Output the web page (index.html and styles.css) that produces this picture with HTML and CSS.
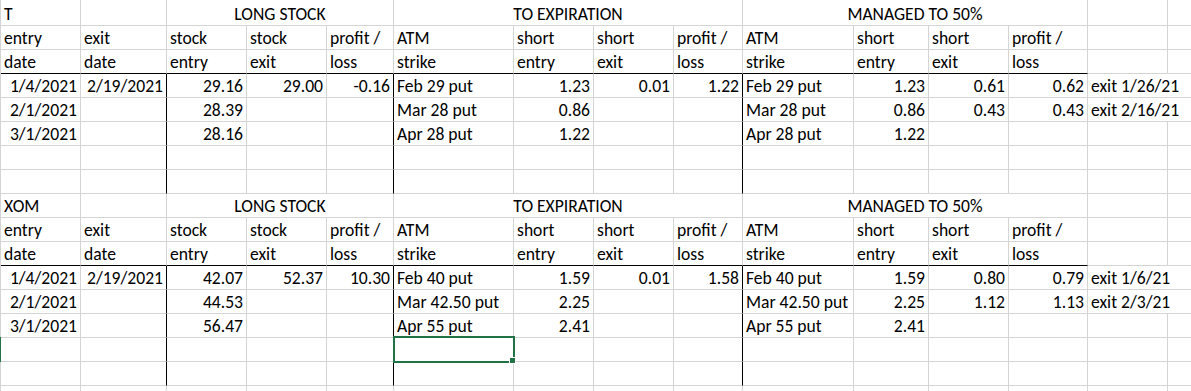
FILE: index.html
```html
<!DOCTYPE html>
<html>
<head>
<meta charset="utf-8">
<link rel="stylesheet" href="styles.css">
</head>
<body>
<div class="sheet">
  <div class="grid">
    <!-- row 1 -->
    <div class="c first">T</div><div class="c first"></div>
    <div class="c first ctr s3">LONG STOCK</div>
    <div class="c first ctr s4">TO EXPIRATION</div>
    <div class="c first ctr s4">MANAGED TO 50%</div>
    <div class="c first"></div><div class="c first last"></div>
    <!-- row 2 -->
    <div class="c">entry</div><div class="c">exit</div><div class="c">stock</div><div class="c">stock</div><div class="c">profit /</div>
    <div class="c">ATM</div><div class="c">short</div><div class="c">short</div><div class="c">profit /</div>
    <div class="c">ATM</div><div class="c">short</div><div class="c">short</div><div class="c">profit /</div>
    <div class="c"></div><div class="c last"></div>
    <!-- row 3 -->
    <div class="c bb">date</div><div class="c bb">date</div><div class="c bb">entry</div><div class="c bb">exit</div><div class="c bb">loss</div>
    <div class="c bb">strike</div><div class="c bb">entry</div><div class="c bb">exit</div><div class="c bb">loss</div>
    <div class="c bb">strike</div><div class="c bb">entry</div><div class="c bb">exit</div><div class="c bb">loss</div>
    <div class="c"></div><div class="c last"></div>
    <!-- row 4 -->
    <div class="c r">1/4/2021</div><div class="c r br">2/19/2021</div><div class="c r">29.16</div><div class="c r">29.00</div><div class="c r br">-0.16</div>
    <div class="c">Feb 29 put</div><div class="c r">1.23</div><div class="c r">0.01</div><div class="c r br">1.22</div>
    <div class="c">Feb 29 put</div><div class="c r">1.23</div><div class="c r">0.61</div><div class="c r">0.62</div>
    <div class="c s2 last">exit 1/26/21</div>
    <!-- row 5 -->
    <div class="c r">2/1/2021</div><div class="c br"></div><div class="c r">28.39</div><div class="c"></div><div class="c br"></div>
    <div class="c">Mar 28 put</div><div class="c r">0.86</div><div class="c"></div><div class="c br"></div>
    <div class="c">Mar 28 put</div><div class="c r">0.86</div><div class="c r">0.43</div><div class="c r">0.43</div>
    <div class="c s2 last">exit 2/16/21</div>
    <!-- row 6 -->
    <div class="c r">3/1/2021</div><div class="c br"></div><div class="c r">28.16</div><div class="c"></div><div class="c br"></div>
    <div class="c">Apr 28 put</div><div class="c r">1.22</div><div class="c"></div><div class="c br"></div>
    <div class="c">Apr 28 put</div><div class="c r">1.22</div><div class="c"></div><div class="c"></div>
    <div class="c"></div><div class="c last"></div>
    <!-- row 7 -->
    <div class="c"></div><div class="c br"></div><div class="c"></div><div class="c"></div><div class="c br"></div>
    <div class="c"></div><div class="c"></div><div class="c"></div><div class="c br"></div>
    <div class="c"></div><div class="c"></div><div class="c"></div><div class="c"></div>
    <div class="c"></div><div class="c last"></div>
    <!-- row 8 -->
    <div class="c"></div><div class="c br"></div><div class="c"></div><div class="c"></div><div class="c br"></div>
    <div class="c"></div><div class="c"></div><div class="c"></div><div class="c br"></div>
    <div class="c"></div><div class="c"></div><div class="c"></div><div class="c"></div>
    <div class="c"></div><div class="c last"></div>
    <!-- row 9 -->
    <div class="c">XOM</div><div class="c"></div>
    <div class="c ctr s3">LONG STOCK</div>
    <div class="c ctr s4">TO EXPIRATION</div>
    <div class="c ctr s4">MANAGED TO 50%</div>
    <div class="c"></div><div class="c last"></div>
    <!-- row 10 -->
    <div class="c">entry</div><div class="c">exit</div><div class="c">stock</div><div class="c">stock</div><div class="c">profit /</div>
    <div class="c">ATM</div><div class="c">short</div><div class="c">short</div><div class="c">profit /</div>
    <div class="c">ATM</div><div class="c">short</div><div class="c">short</div><div class="c">profit /</div>
    <div class="c"></div><div class="c last"></div>
    <!-- row 11 -->
    <div class="c bb">date</div><div class="c bb">date</div><div class="c bb">entry</div><div class="c bb">exit</div><div class="c bb">loss</div>
    <div class="c bb">strike</div><div class="c bb">entry</div><div class="c bb">exit</div><div class="c bb">loss</div>
    <div class="c bb">strike</div><div class="c bb">entry</div><div class="c bb">exit</div><div class="c bb">loss</div>
    <div class="c"></div><div class="c last"></div>
    <!-- row 12 -->
    <div class="c r">1/4/2021</div><div class="c r br">2/19/2021</div><div class="c r">42.07</div><div class="c r">52.37</div><div class="c r br">10.30</div>
    <div class="c">Feb 40 put</div><div class="c r">1.59</div><div class="c r">0.01</div><div class="c r br">1.58</div>
    <div class="c">Feb 40 put</div><div class="c r">1.59</div><div class="c r">0.80</div><div class="c r">0.79</div>
    <div class="c s2 last">exit 1/6/21</div>
    <!-- row 13 -->
    <div class="c r">2/1/2021</div><div class="c br"></div><div class="c r">44.53</div><div class="c"></div><div class="c br"></div>
    <div class="c">Mar 42.50 put</div><div class="c r">2.25</div><div class="c"></div><div class="c br"></div>
    <div class="c">Mar 42.50 put</div><div class="c r">2.25</div><div class="c r">1.12</div><div class="c r">1.13</div>
    <div class="c s2 last">exit 2/3/21</div>
    <!-- row 14 -->
    <div class="c r">3/1/2021</div><div class="c br"></div><div class="c r">56.47</div><div class="c"></div><div class="c br"></div>
    <div class="c">Apr 55 put</div><div class="c r">2.41</div><div class="c"></div><div class="c br"></div>
    <div class="c">Apr 55 put</div><div class="c r">2.41</div><div class="c"></div><div class="c"></div>
    <div class="c"></div><div class="c last"></div>
    <!-- row 15 -->
    <div class="c"></div><div class="c br"></div><div class="c"></div><div class="c"></div><div class="c br"></div>
    <div class="c"></div><div class="c"></div><div class="c"></div><div class="c br"></div>
    <div class="c"></div><div class="c"></div><div class="c"></div><div class="c"></div>
    <div class="c"></div><div class="c last"></div>
    <!-- row 16 -->
    <div class="c"></div><div class="c br"></div><div class="c"></div><div class="c"></div><div class="c br"></div>
    <div class="c"></div><div class="c"></div><div class="c"></div><div class="c br"></div>
    <div class="c"></div><div class="c"></div><div class="c"></div><div class="c"></div>
    <div class="c"></div><div class="c last"></div>
    <!-- row 17 -->
    <div class="c"></div><div class="c"></div><div class="c"></div><div class="c"></div><div class="c"></div>
    <div class="c"></div><div class="c"></div><div class="c"></div><div class="c"></div>
    <div class="c"></div><div class="c"></div><div class="c"></div><div class="c"></div>
    <div class="c"></div><div class="c last"></div>
  </div>
  <div class="row-mark"></div>
  <div class="selection"><div class="handle"></div></div>
</div>
</body>
</html>
```
FILE: styles.css
```css
html, body {
  margin: 0;
  padding: 0;
  background: #ffffff;
  overflow: hidden;
}

.sheet {
  position: relative;
  width: 1191px;
  height: 391px;
  overflow: hidden;
  font-family: Carlito, Calibri, "Liberation Sans", sans-serif;
  font-size: 17.6px;
  color: #000000;
}

.grid {
  display: grid;
  grid-template-columns: 80px 86px 80px 80px 67px 120px 80px 80px 69px 111px 75px 80px 79px 80px 23px;
  grid-template-rows: 26px;
  grid-auto-rows: 24px;
  border-left: 1px solid #d4d4d4;
}

.c {
  box-sizing: border-box;
  border-right: 1px solid #d4d4d4;
  border-bottom: 1px solid #d4d4d4;
  padding: 0 3px 0 3px;
  display: flex;
  align-items: flex-end;
  white-space: nowrap;
  line-height: 22px;
  overflow: visible;
}

.c.last { border-right: none; }

.r { justify-content: flex-end; }
.ctr { justify-content: center; }

.s2 { grid-column: span 2; }
.s3 { grid-column: span 3; }
.s4 { grid-column: span 4; }

.bb { border-bottom-color: #000000; }
.br { border-right-color: #000000; }

.row-mark {
  position: absolute;
  left: 0;
  top: 337px;
  width: 1px;
  height: 25px;
  background: #217346;
}

.selection {
  position: absolute;
  left: 393px;
  top: 336px;
  width: 122px;
  height: 27px;
  box-sizing: border-box;
  border: 2px solid #217346;
}

.handle {
  position: absolute;
  right: -3px;
  bottom: -3px;
  width: 5px;
  height: 5px;
  background: #217346;
  border: 1px solid #ffffff;
}
```
